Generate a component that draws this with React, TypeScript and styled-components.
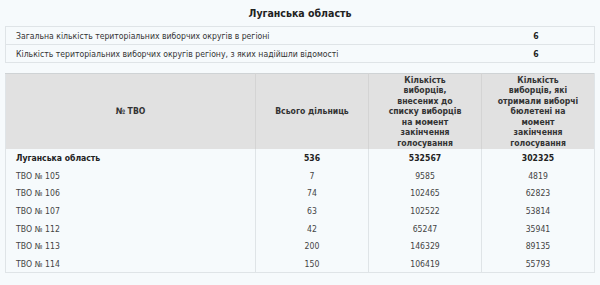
import React from 'react';
import styled, { createGlobalStyle } from 'styled-components';

const GlobalStyle = createGlobalStyle`
  html, body {
    margin: 0;
    padding: 0;
    background: #f6fafc;
  }
  body {
    font-family: 'DejaVu Sans Condensed', 'DejaVu Sans', Verdana, sans-serif;
    color: #333;
  }
`;

const Page = styled.div`
  padding: 0 5px;
  width: 590px;
`;

const Title = styled.h2`
  margin: 0;
  height: 26px;
  line-height: 26px;
  text-align: center;
  font-size: 10.5px;
  font-weight: bold;
  color: #222;
`;

const InfoTable = styled.table`
  width: 100%;
  border-collapse: collapse;
  border: 1px solid #dfe4e7;
  font-size: 8.6px;
  margin-bottom: 10px;
`;

const InfoRow = styled.tr`
  height: 18px;
  & + & td {
    border-top: 1px solid #dfe4e7;
  }
`;

const InfoLabel = styled.td`
  padding: 0 0 0 10px;
`;

const InfoValue = styled.td`
  width: 114px;
  text-align: center;
  font-weight: bold;
  color: #222;
`;

const DataTable = styled.table`
  width: 100%;
  border-collapse: collapse;
  border: 1px solid #dfe4e7;
  border-top: 1px solid #cfd3d5;
  font-size: 8.6px;
`;

const HeadCell = styled.th<{ $w?: number }>`
  background: #e1e1e1;
  height: 75px;
  padding: 0 4px;
  font-weight: bold;
  line-height: 10.4px;
  color: #333;
  text-align: center;
  vertical-align: middle;
  border-left: 1px solid #d4d4d4;
  width: ${p => (p.$w ? `${p.$w}px` : 'auto')};
  &:first-child {
    border-left: none;
  }
`;

const BodyRow = styled.tr`
  height: 17.7px;
`;

const Cell = styled.td<{ $bold?: boolean; $left?: boolean }>`
  padding: 0 ${p => (p.$left ? '0 0 10px' : '0')};
  text-align: ${p => (p.$left ? 'left' : 'center')};
  font-weight: ${p => (p.$bold ? 'bold' : 'normal')};
  color: ${p => (p.$bold ? '#222' : '#444')};
  border-left: 1px solid #dfe4e7;
  &:first-child {
    border-left: none;
  }
`;

const info = [
  ['Загальна кількість територіальних виборчих округів в регіоні', '6'],
  ['Кількість територіальних виборчих округів регіону, з яких надійшли відомості', '6'],
];

const rows = [
  ['ТВО № 105', '7', '9585', '4819'],
  ['ТВО № 106', '74', '102465', '62823'],
  ['ТВО № 107', '63', '102522', '53814'],
  ['ТВО № 112', '42', '65247', '35941'],
  ['ТВО № 113', '200', '146329', '89135'],
  ['ТВО № 114', '150', '106419', '55793'],
];

export default function App() {
  return (
    <Page>
      <GlobalStyle />
      <Title>Луганська область</Title>

      <InfoTable>
        <tbody>
          {info.map(([label, value]) => (
            <InfoRow key={label}>
              <InfoLabel>{label}</InfoLabel>
              <InfoValue>{value}</InfoValue>
            </InfoRow>
          ))}
        </tbody>
      </InfoTable>

      <DataTable>
        <thead>
          <tr>
            <HeadCell>№ ТВО</HeadCell>
            <HeadCell $w={104}>Всього дільниць</HeadCell>
            <HeadCell $w={104}>
              Кількість<br />виборців,<br />внесених до<br />списку виборців<br />на момент<br />закінчення<br />голосування
            </HeadCell>
            <HeadCell $w={104}>
              Кількість<br />виборців, які<br />отримали виборчі<br />бюлетені на<br />момент<br />закінчення<br />голосування
            </HeadCell>
          </tr>
        </thead>
        <tbody>
          <BodyRow>
            <Cell $left $bold>Луганська область</Cell>
            <Cell $bold>536</Cell>
            <Cell $bold>532567</Cell>
            <Cell $bold>302325</Cell>
          </BodyRow>
          {rows.map(([name, a, b, c]) => (
            <BodyRow key={name}>
              <Cell $left>{name}</Cell>
              <Cell>{a}</Cell>
              <Cell>{b}</Cell>
              <Cell>{c}</Cell>
            </BodyRow>
          ))}
        </tbody>
      </DataTable>
    </Page>
  );
}
